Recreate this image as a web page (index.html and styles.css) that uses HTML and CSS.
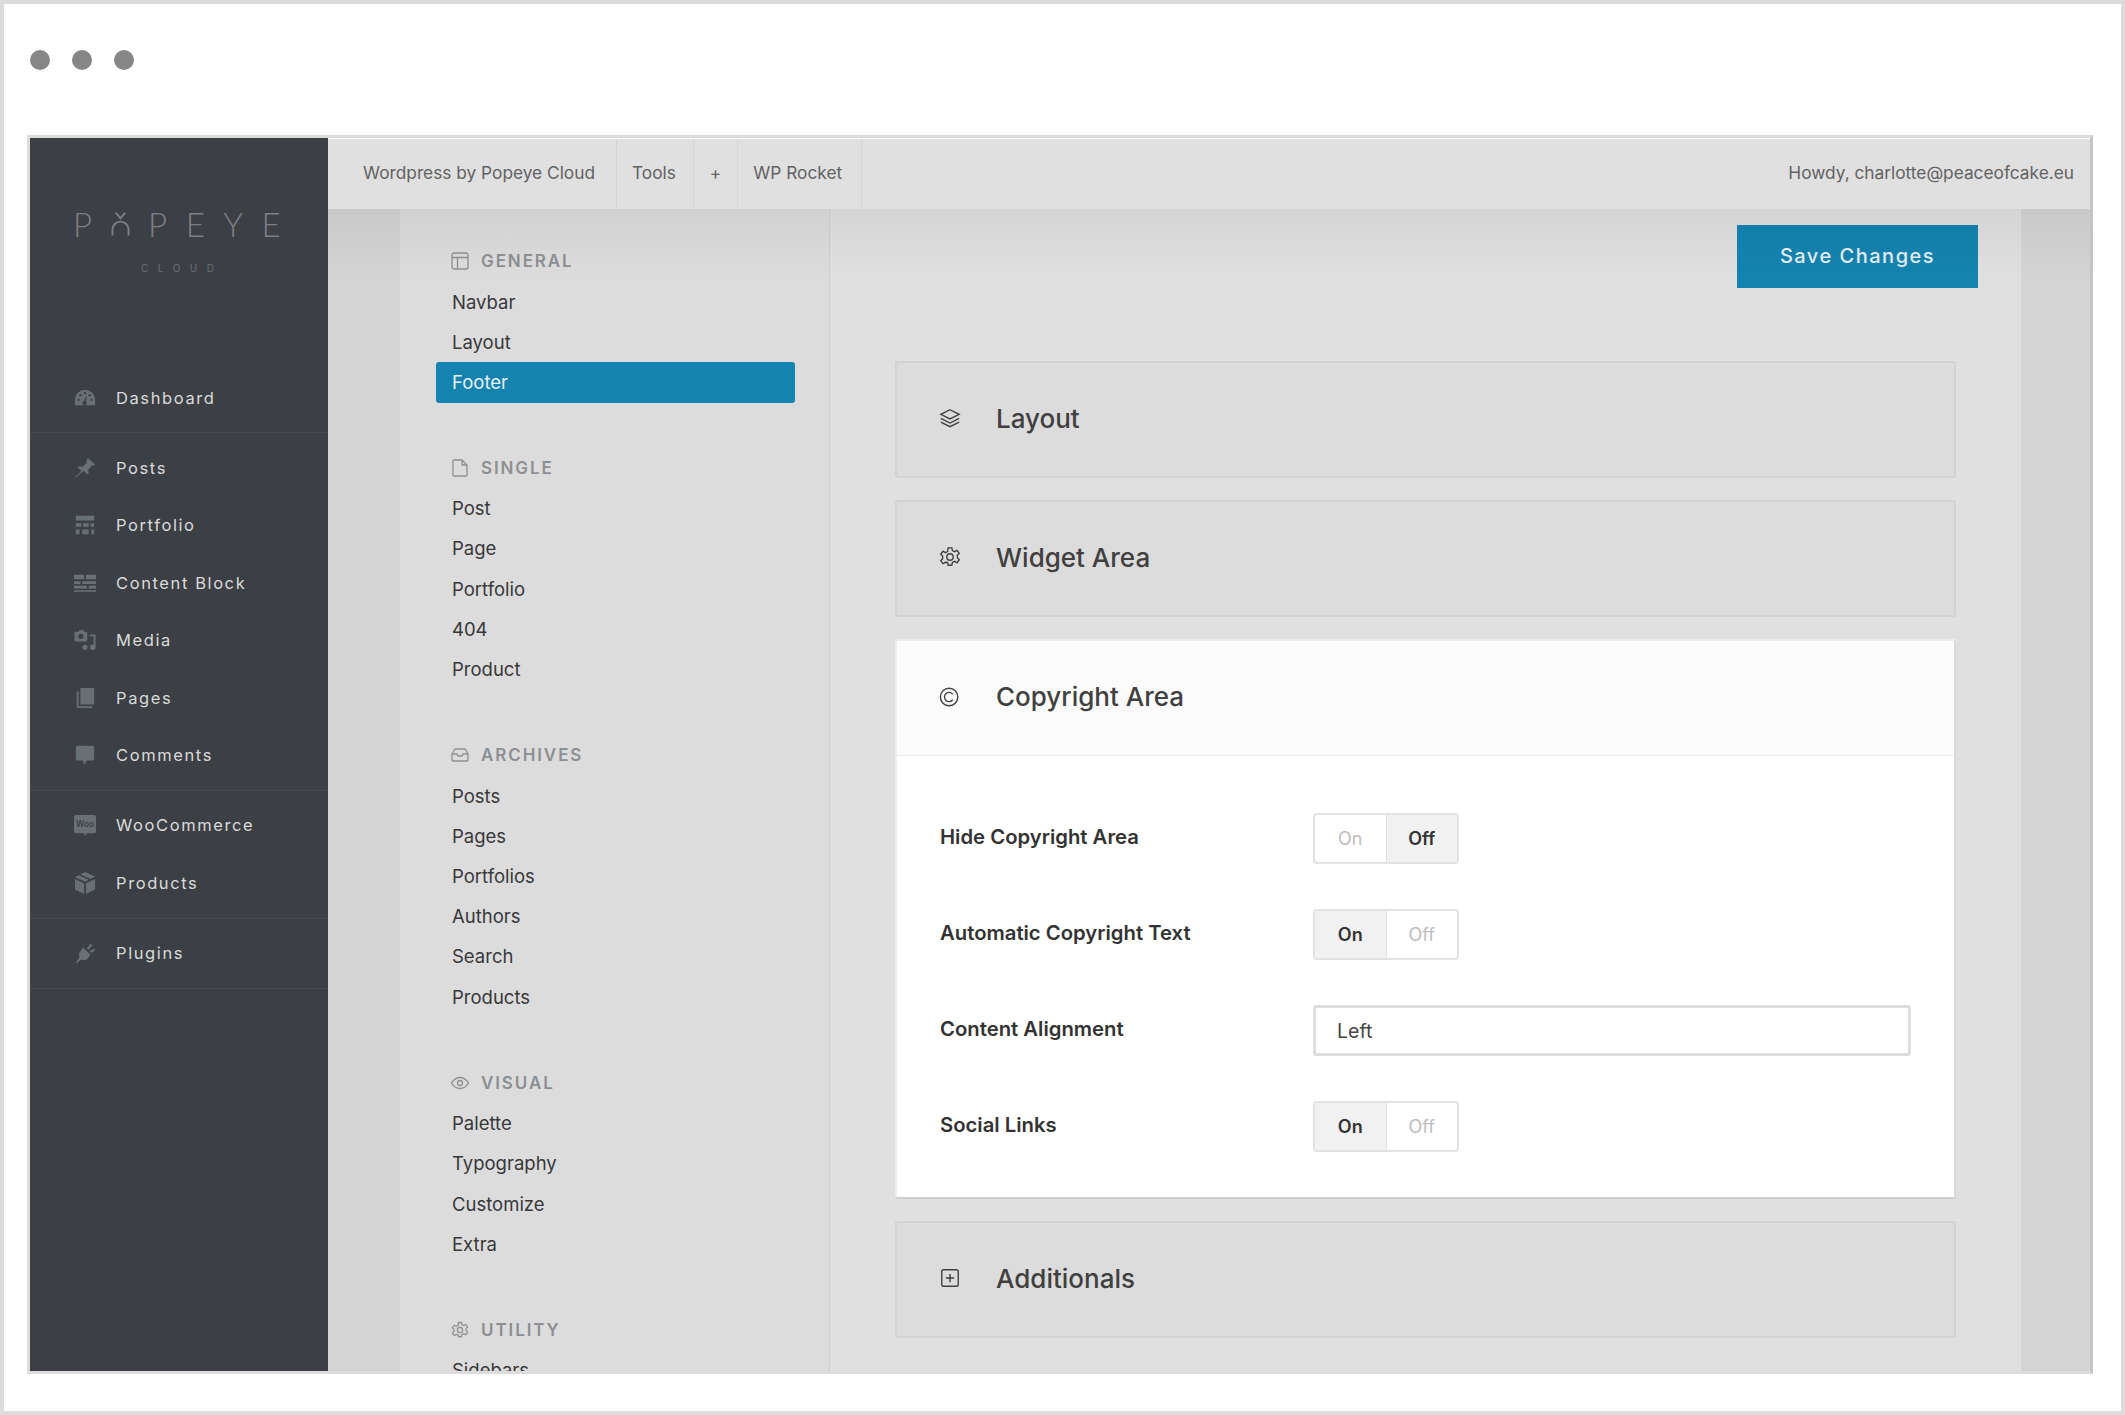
FILE: index.html
```html
<!DOCTYPE html>
<html lang="en">

<head>
  <meta charset="UTF-8" />
  <title>Popeye Cloud</title>
  <link rel="stylesheet" href="styles.css">
</head>

<body>
  <div class="frame">
    <div class="dots"><span></span><span></span><span></span></div>

    <div class="shot">
      <aside class="sidebar">
        <div class="logo">
          <div class="logo-name">
            <span>P</span>
            <svg class="logo-o" viewBox="0 0 20 26"><path d="M5 1l5 6 5-6M1.500 25v-6a8.500 8.500 0 0 1 17 0v6"/></svg>
            <span>P</span><span>E</span><span>Y</span><span>E</span>
          </div>
          <div class="logo-sub">CLOUD</div>
        </div>

        <div class="side-group">
          <a class="side-item">
            <svg viewBox="0 0 24 24"><path d="M1 20v-6a11 11 0 0 1 22 0v6z"/><g class="cut"><circle cx="5" cy="14" r="1.3"/><circle cx="7" cy="9" r="1.3"/><circle cx="12" cy="6.5" r="1.3"/><circle cx="19" cy="14" r="1.3"/><circle cx="17" cy="9" r="1.3"/><path d="M14 9l-1 7a2.2 2.2 0 1 1-2.4-.4z"/></g></svg>
            Dashboard
          </a>
        </div>

        <div class="side-group">
          <a class="side-item">
            <svg viewBox="0 0 24 24"><path d="M15 1l8 7-1.500 1.500-1.500-.5-4.500 4.500 .5 4-1.500 1.500-4-4L1.500 23l-.5-.5 7-7.500-4-3.500L5.500 10l4 .5 4.500-4.500-.5-1.500z"/></svg>
            Posts
          </a>
          <a class="side-item">
            <svg viewBox="0 0 24 24"><path d="M2 2h20v5H2zM2 10h6v4H2zM10 10h6v4h-6zM18 10h4v4h-4zM2 17h4v5H2zM9 17h7v5H9zM19 17h3v5h-3z"/></svg>
            Portfolio
          </a>
          <a class="side-item">
            <svg viewBox="0 0 24 24"><path d="M0 3h11v5H0zM13 3h11v5H13zM0 10h7v3H0zM9 10h15v3H9zM0 15h14v3H0zM16 15h8v3h-8zM0 20h24v1.500H0z"/></svg>
            Content Block
          </a>
          <a class="side-item">
            <svg viewBox="0 0 24 24"><path d="M2 3h3l1-2h4l1 2h2a1.500 1.500 0 0 1 1.500 1.500V12a1.500 1.500 0 0 1-1.500 1.500H2A1.500 1.500 0 0 1 .500 12V4.500A1.500 1.500 0 0 1 2 3z"/><circle class="cut" cx="7.500" cy="8" r="2.800"/><path d="M17 6h6.500v14a3 3 0 1 1-2-2.800V8H17z"/><circle cx="12" cy="20" r="2.800"/></svg>
            Media
          </a>
          <a class="side-item">
            <svg viewBox="0 0 24 24"><path d="M7 1h15v18H7z"/><path d="M3 5h2v16h15v2H3z"/></svg>
            Pages
          </a>
          <a class="side-item">
            <svg viewBox="0 0 24 24"><path d="M4 2h16a2 2 0 0 1 2 2v12a2 2 0 0 1-2 2h-6l-3 5-1-5H4a2 2 0 0 1-2-2V4a2 2 0 0 1 2-2z"/></svg>
            Comments
          </a>
        </div>

        <div class="side-group">
          <a class="side-item">
            <svg viewBox="0 0 24 24"><path d="M2 1h20a2 2 0 0 1 2 2v16a2 2 0 0 1-2 2h-8l-2 3-1-3H2a2 2 0 0 1-2-2V3a2 2 0 0 1 2-2z"/><text class="woo" x="12" y="14" text-anchor="middle">Woo</text></svg>
            WooCommerce
          </a>
          <a class="side-item">
            <svg viewBox="0 0 24 24"><path d="M12 0l11 5-5 2.500L7 2.500zM5 3.500L16 8.500 12 10.500 1 5.500zM1 7.500l10 5V24L1 19zM13 12.500l10-5V19l-10 5z"/></svg>
            Products
          </a>
        </div>

        <div class="side-group">
          <a class="side-item">
            <svg viewBox="0 0 24 24"><path d="M10 6l8 8-3 4c-2 2-5 2-7 1l-5 4-1-1 4-5c-1-2-1-5 1-7zM14 7l4-5 2 1.500-4 5zM17 10l5-3 1 2-4 3z"/></svg>
            Plugins
          </a>
        </div>
      </aside>

      <div class="main">
        <div class="topbar">
          <a class="top-link first">Wordpress by Popeye Cloud</a>
          <a class="top-link">Tools</a>
          <a class="top-link plus">+</a>
          <a class="top-link rocket">WP Rocket</a>
          <span class="howdy">Howdy, charlotte@peaceofcake.eu</span>
        </div>

        <div class="workspace">
          <div class="gutter"></div>

          <nav class="panel">
            <div class="panel-section">
              <h4>
                <svg viewBox="0 0 18 18"><rect x="1" y="1" width="16" height="16" rx="2"/><path d="M1 5.500h16M6.500 5.500V17"/></svg>
                GENERAL
              </h4>
              <a class="panel-link">Navbar</a>
              <a class="panel-link">Layout</a>
              <a class="panel-link active">Footer</a>
            </div>

            <div class="panel-section">
              <h4>
                <svg viewBox="0 0 18 18"><path d="M3 1h8l5 5v10a1 1 0 0 1-1 1H3a1 1 0 0 1-1-1V2a1 1 0 0 1 1-1zM11 1v5h5"/></svg>
                SINGLE
              </h4>
              <a class="panel-link">Post</a>
              <a class="panel-link">Page</a>
              <a class="panel-link">Portfolio</a>
              <a class="panel-link">404</a>
              <a class="panel-link">Product</a>
            </div>

            <div class="panel-section">
              <h4>
                <svg viewBox="0 0 18 18"><path d="M1 8l3-5h10l3 5v6a1 1 0 0 1-1 1H2a1 1 0 0 1-1-1zM1 8h5l1 2h4l1-2h5"/></svg>
                ARCHIVES
              </h4>
              <a class="panel-link">Posts</a>
              <a class="panel-link">Pages</a>
              <a class="panel-link">Portfolios</a>
              <a class="panel-link">Authors</a>
              <a class="panel-link">Search</a>
              <a class="panel-link">Products</a>
            </div>

            <div class="panel-section">
              <h4>
                <svg viewBox="0 0 18 18"><path d="M.500 9C3 5 6 3.500 9 3.500S15 5 17.500 9C15 13 12 14.500 9 14.500S3 13 .500 9z"/><circle cx="9" cy="9" r="2.500"/></svg>
                VISUAL
              </h4>
              <a class="panel-link">Palette</a>
              <a class="panel-link">Typography</a>
              <a class="panel-link">Customize</a>
              <a class="panel-link">Extra</a>
            </div>

            <div class="panel-section">
              <h4>
                <svg class="gear" viewBox="0 0 24 24"><circle cx="12" cy="12" r="3.500"/><path d="M10 2h4l.6 3 2.400 1.200 2.700-1.500 2.400 3.300-2.100 2.200v2.600l2.100 2.200-2.400 3.300-2.700-1.500-2.400 1.200-.6 3h-4l-.6-3L7 17.800l-2.700 1.500-2.400-3.300L4 13.800v-2.600L1.900 9l2.400-3.300L7 7.200l2.400-1.200z"/></svg>
                UTILITY
              </h4>
              <a class="panel-link">Sidebars</a>
            </div>
          </nav>

          <div class="content">
            <div class="save-row"><button class="save">Save Changes</button></div>

            <div class="card">
              <div class="card-head">
                <svg viewBox="0 0 24 24"><path d="M12 3l10 5-10 5L2 8zM2 12.500l10 5 10-5M2 16.500l10 5 10-5"/></svg>
                Layout
              </div>
            </div>

            <div class="card">
              <div class="card-head">
                <svg viewBox="0 0 24 24"><circle cx="12" cy="12" r="3.500"/><path d="M10 2h4l.6 3 2.400 1.200 2.700-1.500 2.400 3.300-2.100 2.200v2.600l2.100 2.200-2.400 3.300-2.700-1.500-2.400 1.200-.6 3h-4l-.6-3L7 17.800l-2.700 1.500-2.400-3.300L4 13.800v-2.600L1.900 9l2.400-3.300L7 7.200l2.400-1.200z"/></svg>
                Widget Area
              </div>
            </div>

            <div class="card open">
              <div class="card-head">
                <svg viewBox="0 0 24 24"><circle cx="11" cy="12" r="9.500"/><path d="M15 9a5 5 0 1 0 0 6"/></svg>
                Copyright Area
              </div>
              <div class="card-body">
                <div class="field-label">Hide Copyright Area</div>
                <div class="toggle"><span>On</span><span class="on">Off</span></div>

                <div class="field-label">Automatic Copyright Text</div>
                <div class="toggle"><span class="on">On</span><span>Off</span></div>

                <div class="field-label">Content Alignment</div>
                <div class="select">Left</div>

                <div class="field-label">Social Links</div>
                <div class="toggle"><span class="on">On</span><span>Off</span></div>
              </div>
            </div>

            <div class="card">
              <div class="card-head">
                <svg viewBox="0 0 24 24"><rect x="3" y="3" width="18" height="18" rx="2"/><path d="M12 7.500v9M7.500 12h9"/></svg>
                Additionals
              </div>
            </div>
          </div>

          <div class="gutter"></div>
        </div>
      </div>
    </div>
  </div>
</body>

</html>
```

FILE: styles.css
```css
* {
  box-sizing: border-box;
}

body {
  margin: 0;
  background: #fff;
  font-family: Inter, 'Open Sans', sans-serif;
}

.frame {
  width: 2125px;
  height: 1415px;
  border: 4px solid #dcdcdc;
  padding: 0 28px 0 23px;
  background: #fff;
  overflow: hidden;
}

.dots {
  display: flex;
  gap: 22px;
  height: 131px;
  padding: 46px 0 0 3px;
}

.dots span {
  width: 20px;
  height: 20px;
  border-radius: 50%;
  background: #868686;
}

.shot {
  display: flex;
  height: 1239px;
  border: 3px solid #dcdcdc;
  border-right-color: #c4c4c4;
  overflow: hidden;
}

/* left dark bar */
.sidebar {
  width: 298px;
  flex-shrink: 0;
  background: #3c4044;
}

.logo {
  height: 225px;
  padding-top: 72px;
}

.logo-name {
  display: flex;
  align-items: center;
  gap: 18.5px;
  padding-left: 43px;
  height: 28px;
  font-family: Lato, sans-serif;
  font-weight: 300;
  font-size: 33px;
  color: #7c7f85;
}

.logo-o {
  width: 19px;
  height: 26px;
  fill: none;
  stroke: #7c7f85;
  stroke-width: 2;
}

.logo-sub {
  margin-top: 24px;
  padding-left: 111px;
  font-size: 10px;
  letter-spacing: 9.5px;
  color: #6c6f74;
}

.side-group {
  padding: 6px 0;
  border-bottom: 1px solid #47494e;
}

.side-item {
  display: flex;
  align-items: center;
  gap: 20px;
  height: 57.4px;
  padding-left: 44px;
  font-size: 16.5px;
  font-weight: 400;
  letter-spacing: 1.6px;
  color: #dadada;
}

.side-item svg {
  width: 22px;
  height: 22px;
  fill: #687076;
}

.side-item .cut {
  fill: #3c4044;
}

.side-item .woo {
  font-size: 9px;
  font-weight: 600;
  letter-spacing: 0;
  fill: #3c4044;
}

/* right of the sidebar */
.main {
  flex: 1;
  display: flex;
  flex-direction: column;
  min-width: 0;
  border-top: 1px solid #fff;
}

.topbar {
  display: flex;
  align-items: center;
  height: 70px;
  flex-shrink: 0;
  background: #e0e0e0;
  color: #626262;
  font-size: 17.3px;
}

.top-link {
  display: flex;
  align-items: center;
  height: 100%;
  padding: 0 17px 3px 15px;
  border-right: 1px solid #d6d6d6;
}

.top-link.first {
  padding-left: 35px;
  padding-right: 21px;
}

.top-link.plus {
  padding-left: 16px;
  padding-right: 16px;
}

.top-link.rocket {
  padding-right: 19px;
}

.howdy {
  margin-left: auto;
  padding: 0 16px 3px 0;
}

.workspace {
  flex: 1;
  display: flex;
  position: relative;
  min-height: 0;
  background: #e0e0e0;
}

/* soft shadow below the top bar */
.workspace::before {
  content: '';
  position: absolute;
  top: 0;
  left: 0;
  right: 0;
  height: 70px;
  background: linear-gradient(to bottom, rgba(0, 0, 0, 0.05), rgba(0, 0, 0, 0));
  pointer-events: none;
}

.gutter {
  width: 72px;
  flex-shrink: 0;
  background: #d4d4d4;
}

.workspace .gutter:last-child {
  width: 69px;
}

.panel {
  width: 430px;
  flex-shrink: 0;
  padding: 31px 34px 0 36px;
  background: #dcdcdc;
  border-right: 1px solid #d0d0d0;
  overflow: hidden;
}

.panel-section {
  margin-bottom: 45.5px;
}

.panel-section:first-child {
  margin-bottom: 44.5px;
}

.panel-section:first-child h4 {
  height: 42px;
}

.panel-section h4 {
  display: flex;
  align-items: center;
  gap: 12px;
  height: 41px;
  margin: 0;
  padding-left: 15px;
  font-size: 17px;
  font-weight: 600;
  letter-spacing: 1.9px;
  color: #8d8f92;
}

.panel-section h4 svg {
  width: 18px;
  height: 18px;
  fill: none;
  stroke: #8d8f92;
  stroke-width: 1.3;
}

.panel-section h4 svg.gear {
  stroke-width: 1.7;
}

.panel-link {
  display: flex;
  align-items: center;
  height: 40.2px;
  padding-left: 16px;
  border-radius: 3px;
  font-size: 18.5px;
  color: #38383a;
}

.panel-link.active {
  background: #1483b0;
  color: #e8f1f5;
}

.content {
  flex: 1;
  min-width: 0;
  padding: 16px 65px 0 65px;
}

.save-row {
  display: flex;
  justify-content: flex-end;
  margin: 0 -22px 73px 0;
}

.save {
  width: 241px;
  height: 63px;
  padding-bottom: 2px;
  border: none;
  background: #1483b0;
  color: #e4eef3;
  font-family: inherit;
  font-size: 20px;
  font-weight: 500;
  letter-spacing: 1.5px;
}

.card {
  margin-bottom: 22px;
  background: #dcdcdc;
  border: 2px solid #d3d3d3;
  border-radius: 2px;
}

.card-head {
  display: flex;
  align-items: center;
  gap: 35px;
  height: 113px;
  padding: 0 0 3px 42px;
  font-size: 26px;
  font-weight: 500;
  color: #404040;
}

.card-head svg {
  width: 22px;
  height: 22px;
  fill: none;
  stroke: #404040;
  stroke-width: 1.5;
}

.card.open {
  background: #fff;
  border-color: #ececec;
  border-right-color: #dadada;
  border-bottom-color: #cfcfcf;
}

.card.open .card-head {
  background: #fbfbfb;
  border-bottom: 1px solid #ececec;
  height: 115px;
}

.card-body {
  display: grid;
  grid-template-columns: 373px 1fr;
  grid-auto-rows: 51px;
  row-gap: 45px;
  align-items: center;
  padding: 57px 43px 45px 43px;
}

.field-label {
  padding-bottom: 4px;
  font-size: 20.3px;
  font-weight: 600;
  color: #333;
}

.toggle {
  display: flex;
  width: 146px;
  height: 51px;
  border: 2px solid #e2e2e2;
  border-radius: 4px;
  font-size: 18px;
  color: #bdbdbd;
}

.toggle span {
  flex: 1;
  display: flex;
  align-items: center;
  justify-content: center;
}

.toggle span:first-child {
  border-right: 1px solid #e0e0e0;
}

.toggle .on {
  background: #f1f1f1;
  color: #333;
  font-weight: 600;
}

.select {
  display: flex;
  align-items: center;
  height: 51px;
  padding-left: 21px;
  border: 3px solid #dedede;
  border-radius: 3px;
  font-size: 19.5px;
  color: #444;
}
```
